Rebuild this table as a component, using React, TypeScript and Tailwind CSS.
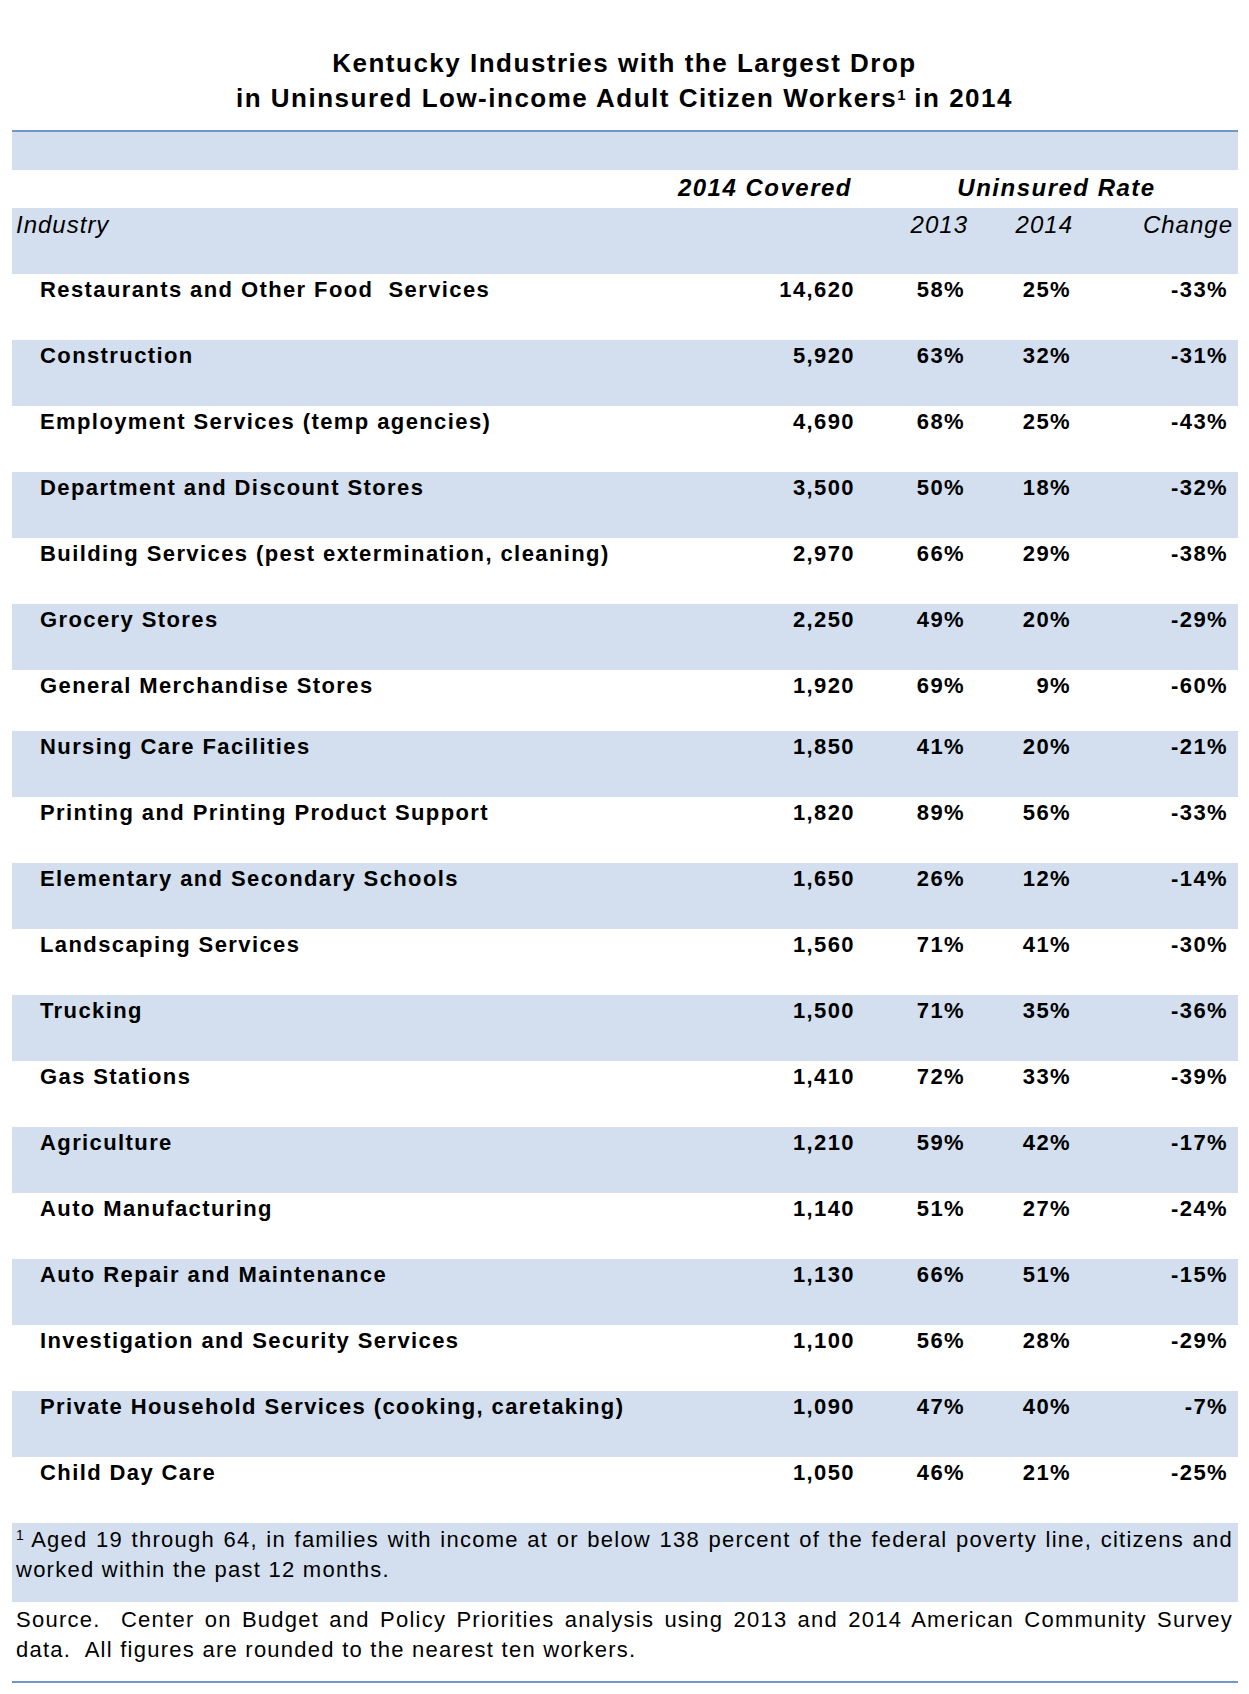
import React from 'react';

type Row = {
  name: string;
  covered: string;
  y2013: string;
  y2014: string;
  change: string;
};

const rows: Row[] = [
  { name: 'Restaurants and Other Food  Services', covered: '14,620', y2013: '58%', y2014: '25%', change: '-33%' },
  { name: 'Construction', covered: '5,920', y2013: '63%', y2014: '32%', change: '-31%' },
  { name: 'Employment Services (temp agencies)', covered: '4,690', y2013: '68%', y2014: '25%', change: '-43%' },
  { name: 'Department and Discount Stores', covered: '3,500', y2013: '50%', y2014: '18%', change: '-32%' },
  { name: 'Building Services (pest extermination, cleaning)', covered: '2,970', y2013: '66%', y2014: '29%', change: '-38%' },
  { name: 'Grocery Stores', covered: '2,250', y2013: '49%', y2014: '20%', change: '-29%' },
  { name: 'General Merchandise Stores', covered: '1,920', y2013: '69%', y2014: '9%', change: '-60%' },
  { name: 'Nursing Care Facilities', covered: '1,850', y2013: '41%', y2014: '20%', change: '-21%' },
  { name: 'Printing and Printing Product Support', covered: '1,820', y2013: '89%', y2014: '56%', change: '-33%' },
  { name: 'Elementary and Secondary Schools', covered: '1,650', y2013: '26%', y2014: '12%', change: '-14%' },
  { name: 'Landscaping Services', covered: '1,560', y2013: '71%', y2014: '41%', change: '-30%' },
  { name: 'Trucking', covered: '1,500', y2013: '71%', y2014: '35%', change: '-36%' },
  { name: 'Gas Stations', covered: '1,410', y2013: '72%', y2014: '33%', change: '-39%' },
  { name: 'Agriculture', covered: '1,210', y2013: '59%', y2014: '42%', change: '-17%' },
  { name: 'Auto Manufacturing', covered: '1,140', y2013: '51%', y2014: '27%', change: '-24%' },
  { name: 'Auto Repair and Maintenance', covered: '1,130', y2013: '66%', y2014: '51%', change: '-15%' },
  { name: 'Investigation and Security Services', covered: '1,100', y2013: '56%', y2014: '28%', change: '-29%' },
  { name: 'Private Household Services (cooking, caretaking)', covered: '1,090', y2013: '47%', y2014: '40%', change: '-7%' },
  { name: 'Child Day Care', covered: '1,050', y2013: '46%', y2014: '21%', change: '-25%' },
];

const App: React.FC = () => {
  return (
    <div className="w-[1249px] min-h-[1694px] bg-white text-black font-['Liberation_Sans',Arial,sans-serif]">
      {/* Title */}
      <div className="pt-[46px] text-center text-[26px] font-bold leading-[35px] tracking-[1.5px]">
        <div>Kentucky Industries with the Largest Drop</div>
        <div>
          in Uninsured Low-income Adult Citizen Workers<sup className="text-[15px] tracking-normal">1</sup> in 2014
        </div>
      </div>

      <div className="ml-[12px] mt-[14px] w-[1226px]">
        <div className="h-[2px] bg-[#7396c9]" />
        <div className="h-[38px] bg-[#d3dfee]" />

        {/* Column headers */}
        <div className="grid h-[38px] grid-cols-[1fr_112px_105px_160px] items-center pb-[4px] pr-[5px] text-[24px] font-bold italic tracking-[1.5px]">
          <div className="pr-[4px] text-right">2014 Covered</div>
          <div className="col-span-3 whitespace-nowrap pl-[24px] text-center">Uninsured Rate</div>
        </div>
        <div className="grid h-[66px] grid-cols-[1fr_100px_112px_105px_160px] items-start bg-[#d3dfee] pr-[5px] pt-[3px] text-[24px] italic leading-[28px] tracking-[1px]">
          <div className="pl-[4px]">Industry</div>
          <div />
          <div className="text-right">2013</div>
          <div className="text-right">2014</div>
          <div className="text-right">Change</div>
        </div>

        {/* Data rows */}
        {rows.map((r, i) => (
          <div
            key={r.name}
            className={`grid grid-cols-[1fr_100px_110px_106px_157px] items-start pr-[10px] pt-[3px] text-[22px] font-bold leading-[26px] tracking-[1.4px] ${
              i % 2 === 1 ? 'bg-[#d3dfee]' : 'bg-white'
            } ${i === 6 ? 'h-[61px]' : 'h-[66px]'}`}
          >
            <div className="whitespace-pre pl-[28px]">{r.name}</div>
            <div className="text-right">{r.covered}</div>
            <div className="text-right">{r.y2013}</div>
            <div className="text-right">{r.y2014}</div>
            <div className="text-right">{r.change}</div>
          </div>
        ))}

        {/* Footnote */}
        <div className="h-[79px] bg-[#d3dfee] pl-[4px] pr-[5px] pt-[2px] text-[22px] leading-[30px] tracking-[1.25px]">
          <div className="whitespace-nowrap text-justify [text-align-last:justify]">
            <sup className="text-[14px] tracking-normal">1</sup> Aged 19 through 64, in families with income at or below 138 percent of the federal poverty line, citizens and
          </div>
          <div>worked within the past 12 months.</div>
        </div>

        {/* Source */}
        <div className="h-[79px] pl-[4px] pr-[5px] pt-[3px] text-[22px] leading-[30px] tracking-[1.25px]">
          <div className="whitespace-pre text-justify [text-align-last:justify]">
            Source.  Center on Budget and Policy Priorities analysis using 2013 and 2014 American Community Survey
          </div>
          <div className="whitespace-pre">data.  All figures are rounded to the nearest ten workers.</div>
        </div>
        <div className="h-[2px] bg-[#7396c9]" />
      </div>
    </div>
  );
};

export default App;
